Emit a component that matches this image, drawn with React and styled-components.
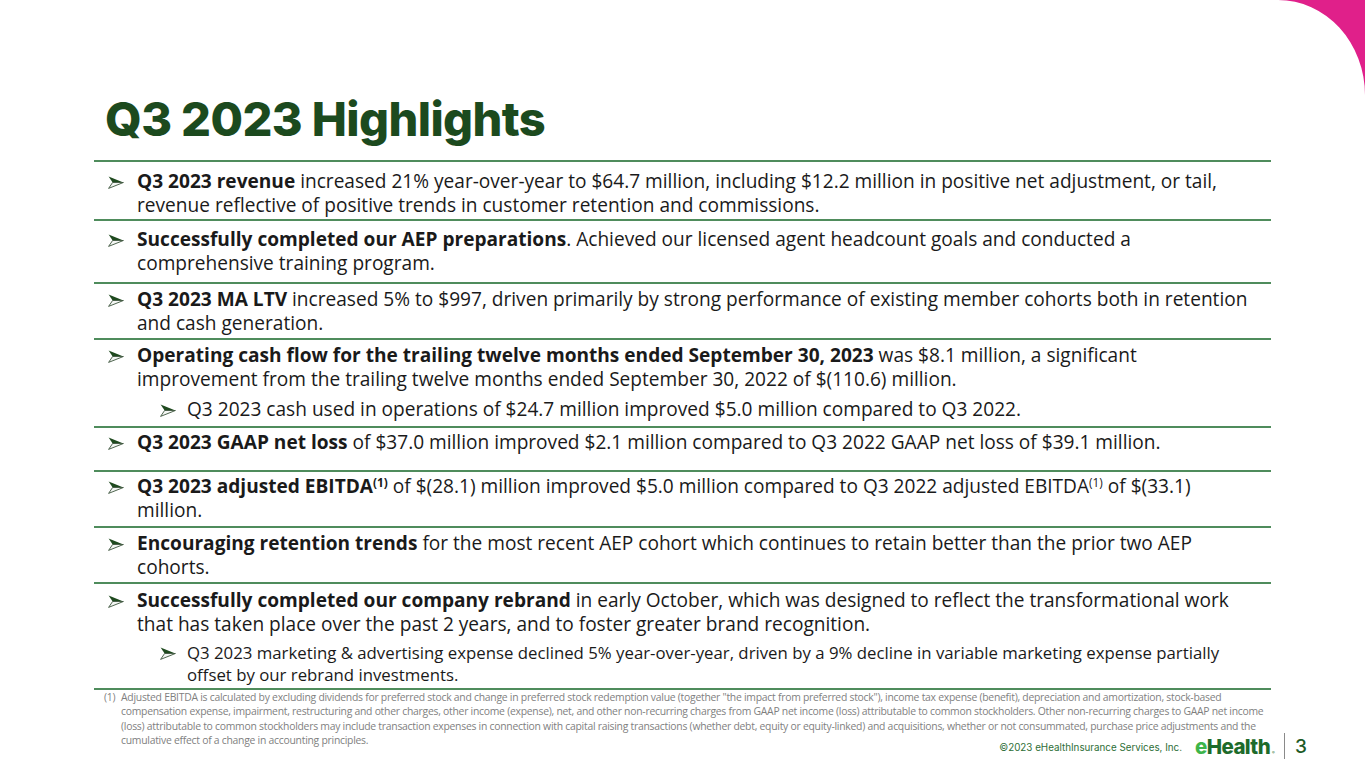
import React from 'react';
import styled, { createGlobalStyle } from 'styled-components';

const GlobalStyle = createGlobalStyle`
  html, body {
    margin: 0;
    padding: 0;
    background: #fff;
  }
  * { box-sizing: border-box; }
`;

const Slide = styled.div`
  position: relative;
  width: 1365px;
  height: 768px;
  overflow: hidden;
  background: #fff;
  font-family: "Open Sans", "Noto Sans", sans-serif;
  color: #1a1a1a;
`;

const Corner = styled.svg`
  position: absolute;
  top: 0;
  right: 0;
`;

const Header = styled.div`
  height: 160px;
  padding-left: 105px;
  display: flex;
  align-items: flex-end;
`;

const Title = styled.h1`
  margin: 0 0 18px;
  font-family: Inter, "Liberation Sans", sans-serif;
  font-weight: 800;
  font-size: 47px;
  line-height: 1;
  letter-spacing: -0.6px;
  color: #1c4a1e;
`;

const List = styled.div`
  margin-left: 94px;
  width: 1177px;
  border-top: 2px solid #4f8c5c;
`;

const Item = styled.div`
  height: ${p => p.h}px;
  padding-top: ${p => p.pt}px;
  border-bottom: 2px solid #4f8c5c;
`;

const Bullet = styled.div`
  display: grid;
  grid-template-columns: ${p => (p.sub ? '27px' : '29px')} 1fr;
  padding-left: ${p => (p.sub ? '66px' : '14px')};
  padding-right: 17px;
  font-size: ${p => (p.small ? '16.8px' : '19.1px')};
  line-height: ${p => (p.small ? '22px' : '23.5px')};
  margin-top: ${p => p.mt || 0}px;
`;

const Mark = styled.span`
  display: flex;
  align-items: center;
  height: ${p => (p.small ? '22px' : '23.5px')};
  padding-top: 1px;
`;

const Text = styled.div`
  b { font-weight: 700; }
  sup {
    font-size: 0.62em;
    line-height: 0;
    vertical-align: 0.55em;
  }
`;

const Footnote = styled.div`
  display: grid;
  grid-template-columns: 17px 1fr;
  margin-left: 104px;
  width: 1166px;
  font-size: 10.4px;
  line-height: 14.4px;
  color: #7f7f7f;
  letter-spacing: -0.26px;
`;

const Footer = styled.div`
  position: absolute;
  right: 58px;
  bottom: 9px;
  display: flex;
  align-items: center;
  gap: 10px;
  font-family: Inter, "Liberation Sans", sans-serif;
`;

const Copy = styled.span`
  font-size: 9.8px;
  color: #2d6e36;
  margin-right: 3px;
  padding-top: 3px;
`;

const Logo = styled.span`
  position: relative;
  font-weight: 800;
  font-size: 20.5px;
  letter-spacing: -0.6px;
  color: #1d6b2b;
  padding-right: 4px;

  em {
    font-style: normal;
    color: #3db54a;
  }
  small {
    position: absolute;
    right: 0;
    bottom: 4px;
    font-size: 4px;
    font-weight: 400;
  }
`;

const Divider = styled.span`
  width: 1px;
  height: 26px;
  background: #8a8a8a;
`;

const PageNo = styled.span`
  font-size: 19px;
  font-weight: 500;
  color: #1d5a26;
`;

const Arrow = () => (
  <svg width="16" height="13" viewBox="0 0 16 13">
    <path d="M0.6 0.6 L15.4 6.5 L4.6 6.5 Z" fill="#1f4a1f" />
    <path d="M4.6 6.5 L15.4 6.5 L0.6 12.4 Z" fill="#f4f6f4" stroke="#3d553d" strokeWidth="0.9" strokeLinejoin="round" />
  </svg>
);

const Point = ({ sub, small, mt, children }) => (
  <Bullet sub={sub} small={small} mt={mt}>
    <Mark small={small}><Arrow /></Mark>
    <Text>{children}</Text>
  </Bullet>
);

export default function App() {
  return (
    <Slide>
      <GlobalStyle />
      <Corner width="90" height="96" viewBox="1275 0 90 96">
        <path d="M1278 0 A87 95 0 0 1 1365 95 L1365 0 Z" fill="#e0208a" />
      </Corner>

      <Header>
        <Title>Q3 2023 Highlights</Title>
      </Header>

      <List>
        <Item h={59} pt={8}>
          <Point>
            <b>Q3 2023 revenue</b> increased 21% year-over-year to $64.7 million, including $12.2 million in positive net adjustment, or tail, revenue reflective of positive trends in customer retention and commissions.
          </Point>
        </Item>
        <Item h={63} pt={7}>
          <Point>
            <b>Successfully completed our AEP preparations</b>. Achieved our licensed agent headcount goals and conducted a comprehensive training program.
          </Point>
        </Item>
        <Item h={56} pt={4}>
          <Point>
            <b>Q3 2023 MA LTV</b> increased 5% to $997, driven primarily by strong performance of existing member cohorts both in retention and cash generation.
          </Point>
        </Item>
        <Item h={88} pt={4}>
          <Point>
            <b>Operating cash flow for the trailing twelve months ended September 30, 2023</b> was $8.1 million, a significant improvement from the trailing twelve months ended September 30, 2022 of $(110.6) million.
          </Point>
          <Point sub mt={7}>
            Q3 2023 cash used in operations of $24.7 million improved $5.0 million compared to Q3 2022.
          </Point>
        </Item>
        <Item h={44} pt={3}>
          <Point>
            <b>Q3 2023 GAAP net loss</b> of $37.0 million improved $2.1 million compared to Q3 2022 GAAP net loss of $39.1 million.
          </Point>
        </Item>
        <Item h={56} pt={3}>
          <Point>
            <b>Q3 2023 adjusted EBITDA<sup>(1)</sup></b> of $(28.1) million improved $5.0 million compared to Q3 2022 adjusted EBITDA<sup>(1)</sup> of $(33.1) million.
          </Point>
        </Item>
        <Item h={56} pt={4}>
          <Point>
            <b>Encouraging retention trends</b> for the most recent AEP cohort which continues to retain better than the prior two AEP cohorts.
          </Point>
        </Item>
        <Item h={106} pt={5}>
          <Point>
            <b>Successfully completed our company rebrand</b> in early October, which was designed to reflect the transformational work that has taken place over the past 2 years, and to foster greater brand recognition.
          </Point>
          <Point sub small mt={6}>
            Q3 2023 marketing &amp; advertising expense declined 5% year-over-year, driven by a 9% decline in variable marketing expense partially offset by our rebrand investments.
          </Point>
        </Item>
      </List>

      <Footnote>
        <span>(1)</span>
        <span>
          Adjusted EBITDA is calculated by excluding dividends for preferred stock and change in preferred stock redemption value (together "the impact from preferred stock"), income tax expense (benefit), depreciation and amortization, stock-based compensation expense, impairment, restructuring and other charges, other income (expense), net, and other non-recurring charges from GAAP net income (loss) attributable to common stockholders. Other non-recurring charges to GAAP net income (loss) attributable to common stockholders may include transaction expenses in connection with capital raising transactions (whether debt, equity or equity-linked) and acquisitions, whether or not consummated, purchase price adjustments and the cumulative effect of a change in accounting principles.
        </span>
      </Footnote>

      <Footer>
        <Copy>©2023 eHealthInsurance Services, Inc.</Copy>
        <Logo><em>e</em>Health<small>®</small></Logo>
        <Divider />
        <PageNo>3</PageNo>
      </Footer>
    </Slide>
  );
}
